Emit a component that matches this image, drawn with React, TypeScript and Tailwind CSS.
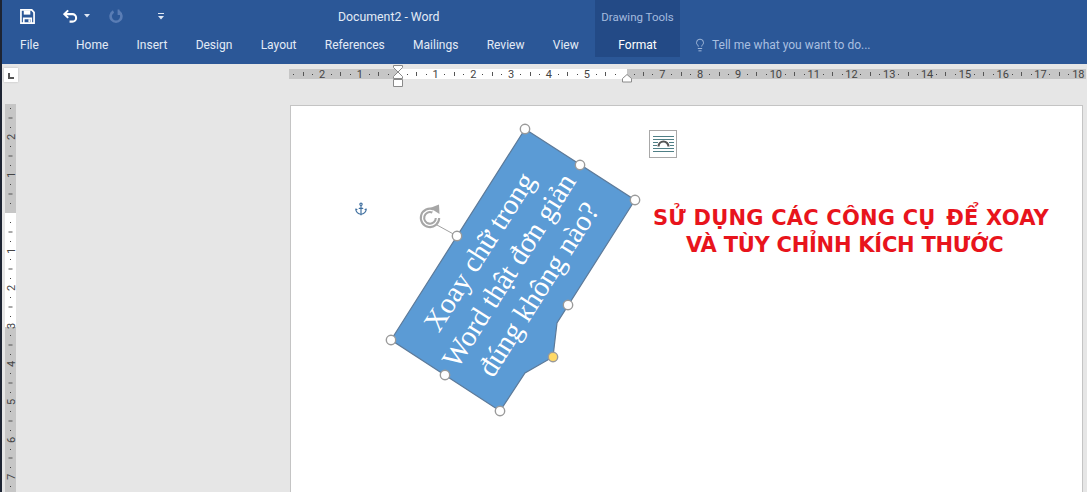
import { Anchor, Lightbulb } from "lucide-react";

const tabs = ["Home", "Insert", "Design", "Layout", "References", "Mailings", "Review", "View"];

// ruler marks go dot, tick, dot, number, repeating every quarter of a unit
function hMarks() {
	const marks: string[] = [];
	for (let n = -2; n <= 18; n++) {
		marks.push("·", "|", "·", n === 0 || n === 6 ? "" : String(Math.abs(n)));
	}
	return marks;
}

function vMarks() {
	const marks: string[] = ["·", "|", "·"];
	for (let n = -2; n <= 7; n++) {
		marks.push(n === 0 ? "" : String(Math.abs(n)), "·", "|", "·");
	}
	return marks;
}

function RulerMark({ mark }: { mark: string }) {
	if (mark === "|") return <span className="block h-[4px] w-px bg-[#555]" />;
	if (mark === "·") return <span className="block h-px w-px bg-[#444]" />;
	return <span className="text-[11px] leading-none text-[#444]">{mark}</span>;
}

function Handle({ x, y, fill = "#fff" }: { x: number; y: number; fill?: string }) {
	return <circle cx={x} cy={y} r="4.7" fill={fill} stroke="#9a9a9a" strokeWidth="1.4" />;
}

export default function App() {
	return (
		<div className="flex h-[492px] w-[1087px] overflow-hidden bg-[#e6e6e6] font-['Roboto',sans-serif]">
			<div className="w-[2px] shrink-0 bg-[#1d2433]" />
			<div className="flex min-w-0 flex-1 flex-col">
				<header className="relative flex h-[64px] shrink-0 flex-col bg-[#2b5797] text-[12px] text-[#e3ebf6]">
					<div className="flex h-[32px] items-center">
						<svg width="15" height="15" viewBox="0 0 16 16" className="ml-[18px]" fill="none">
							<path d="M1 1h11.500L15 3.500V15H1z" stroke="#fff" strokeWidth="1.800" />
							<path d="M4 1.500h7V6H4z" fill="#fff" />
							<path d="M4 15v-5h8v5" stroke="#fff" strokeWidth="1.800" />
							<path d="M9 11h1.600v3H9z" fill="#fff" />
						</svg>
						<svg width="15" height="14" viewBox="0 0 16 14" className="ml-[28px]" fill="none">
							<path d="M5.500 1 1.500 5l4 4" stroke="#fff" strokeWidth="2.200" />
							<path d="M2 5h8a4 4 0 0 1 0 8H7" stroke="#fff" strokeWidth="2.200" />
						</svg>
						<svg width="6" height="4" viewBox="0 0 6 4" className="ml-[6px]">
							<path d="M0 0h6L3 3.500z" fill="#dfe7f3" />
						</svg>
						<svg width="14" height="14" viewBox="0 0 14 14" className="ml-[19px]" fill="none">
							<path d="M4.500 2.500a5.400 5.400 0 1 0 5 0" stroke="#5a7db5" strokeWidth="2.600" />
							<path d="M9.500 .5v4.500h3.500" stroke="#5a7db5" strokeWidth="1.800" />
						</svg>
						<svg width="6" height="7" viewBox="0 0 6 7" className="ml-[35px]">
							<path d="M0 0h6v1H0zM0 3h6L3 6.500z" fill="#dfe7f3" />
						</svg>
					</div>
					<div className="flex h-[26px] items-center">
						<span className="ml-[18px] w-[56px]">File</span>
						<nav className="flex w-[519px] shrink-0 gap-[28.3px]">
							{tabs.map((tab) => (
								<span key={tab}>{tab}</span>
							))}
						</nav>
						<Lightbulb size={14} strokeWidth={1.4} className="ml-[98px] text-[#b9cbe6]" />
						<span className="ml-[5px] text-[#a9bfe0]">Tell me what you want to do...</span>
					</div>
					<div className="absolute left-[336px] top-[9px] text-[12.3px] leading-[16px]">Document2 - Word</div>
					<div className="absolute left-[593px] top-0 flex h-[57px] w-[85px] flex-col items-center bg-[#234a86]">
						<span className="mt-[9px] text-[11.5px] leading-[16px] text-[#a3bbdf]">Drawing Tools</span>
						<span className="mt-[12px] leading-[16px] text-white">Format</span>
					</div>
				</header>

				<div className="flex h-[40px] shrink-0 pt-[4px]">
					<div className="ml-[2px] flex h-[14px] w-[14px] items-center justify-center bg-white shadow-[0_0_2px_#bbb]">
						<span className="mt-[1px] block h-[6px] w-[6px] border-b-2 border-l-2 border-[#555]" />
					</div>
					<div className="relative ml-[271px] mt-[1px] flex h-[10px] w-[797px] items-center bg-[linear-gradient(90deg,#c6c6c6_109px,#fff_109px,#fff_338px,#c6c6c6_338px)]">
						{hMarks().map((mark, i) => (
							<div key={i} className="flex w-[9.458px] shrink-0 justify-center">
								<RulerMark mark={mark} />
							</div>
						))}
						<svg width="12" height="24" viewBox="0 0 12 24" className="absolute left-[103px] top-[-4px]" fill="#fff" stroke="#8a8a8a">
							<path d="M1.500 .5h9v2L6 7 1.500 2.500zM6 7l4.500 4.500v2h-9v-2z" />
							<path d="M1.500 14.500h9v7h-9z" />
						</svg>
						<svg width="12" height="9" viewBox="0 0 12 9" className="absolute left-[332px] top-[5px]" fill="#fff" stroke="#8a8a8a">
							<path d="M6 .5 10.500 4.500v3.500h-9V4.500z" />
						</svg>
					</div>
				</div>

				<div className="flex min-h-0 flex-1">
					<div className="ml-[3px] h-full w-[11px] shrink-0 bg-[linear-gradient(180deg,#c6c6c6_109px,#fff_109px,#fff_223px,#c6c6c6_223px)]">
						{vMarks().map((mark, i) => (
							<div key={i} className="flex h-[9.458px] items-center justify-center overflow-visible">
								<span className="-rotate-90">
									<RulerMark mark={mark} />
								</span>
							</div>
						))}
					</div>
					<main className="relative ml-[274px] mt-[1px] h-[500px] w-[793px] shrink-0 border border-[#c4c4c4] bg-white">
						<svg width="791" height="498" viewBox="291 106 791 498" className="absolute inset-0" fill="none">
							<path
								d="M525 129 635 200 557 323 553 357 525 373 500 411 391 340Z"
								fill="#5b9bd5"
								stroke="#5d7a99"
								strokeWidth="1.200"
							/>
							<path d="M437 225 457 236" stroke="#a0a0a0" />
							<path d="M433 211A7.500 7.500 0 1 0 437.500 218" stroke="#a6a6a6" strokeWidth="5.500" />
							<path d="M433 211A7.500 7.500 0 1 0 437.500 218" stroke="#fff" strokeWidth="1.300" />
							<path d="M430 208 439 204.500 439.500 214z" fill="#a6a6a6" />
							<Handle x={525} y={129} />
							<Handle x={580} y={165} />
							<Handle x={635} y={200} />
							<Handle x={457} y={236} />
							<Handle x={568} y={305} />
							<Handle x={391} y={340} />
							<Handle x={445} y={375} />
							<Handle x={500} y={411} />
							<Handle x={553} y={357} fill="#ffd966" />
						</svg>

						<div className="absolute left-[88px] top-[112px] flex w-[260px] -rotate-[57.6deg] flex-col items-center whitespace-nowrap font-['Liberation_Serif',serif] text-[29px] leading-[35px] text-white">
							<span>Xoay chữ trong</span>
							<span>Word thật đơn giản</span>
							<span>đúng không nào?</span>
						</div>

						<Anchor size={14} strokeWidth={2} className="absolute left-[63px] top-[96px] text-[#3f6f9f]" />

						<div className="absolute left-[358px] top-[24px] flex h-[28px] w-[28px] items-center justify-center border border-[#a8a8a8] bg-white">
							<svg width="21" height="21" viewBox="0 0 21 21" fill="none">
								<path d="M0 2.500h21M0 5.500h21M0 8.500h5M16 8.500h5M0 11.500h4M17 11.500h4M0 14.500h21M0 17.500h21" stroke="#4f7f86" />
								<path d="M5.500 12.500a5 5 0 0 1 10 0" stroke="#555" strokeWidth="2.200" />
							</svg>
						</div>

						<div className="absolute left-[362px] top-[99px] whitespace-nowrap font-['DejaVu_Sans',sans-serif] text-[21px] font-bold leading-[27px] text-[#e8141c]">
							<div className="tracking-[0.2px]">
								SỬ DỤNG CÁC CÔNG CỤ <span className="ml-[3px]">ĐỂ</span> XOAY
							</div>
							<div className="pl-[33px] tracking-[-0.25px]">VÀ TÙY CHỈNH KÍCH THƯỚC</div>
						</div>
					</main>
				</div>
			</div>
		</div>
	);
}
